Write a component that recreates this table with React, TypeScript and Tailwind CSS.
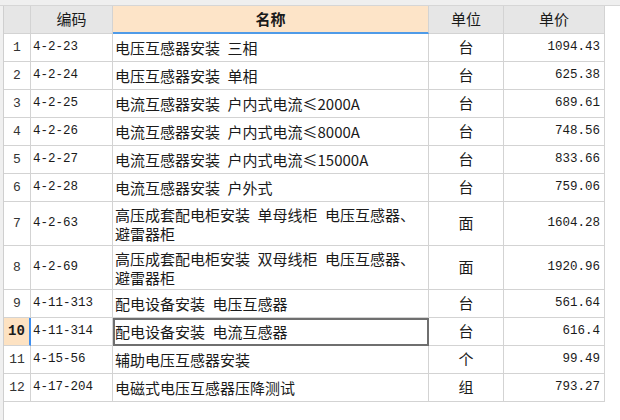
type Row = { no: number; code: string; name: string[]; unit: string; price: string };

const rows: Row[] = [
  { no: 1, code: "4-2-23", name: ["电压互感器安装\u2002三相"], unit: "台", price: "1094.43" },
  { no: 2, code: "4-2-24", name: ["电压互感器安装\u2002单相"], unit: "台", price: "625.38" },
  { no: 3, code: "4-2-25", name: ["电流互感器安装\u2002户内式电流≤2000A"], unit: "台", price: "689.61" },
  { no: 4, code: "4-2-26", name: ["电流互感器安装\u2002户内式电流≤8000A"], unit: "台", price: "748.56" },
  { no: 5, code: "4-2-27", name: ["电流互感器安装\u2002户内式电流≤15000A"], unit: "台", price: "833.66" },
  { no: 6, code: "4-2-28", name: ["电流互感器安装\u2002户外式"], unit: "台", price: "759.06" },
  { no: 7, code: "4-2-63", name: ["高压成套配电柜安装\u2002单母线柜\u2002电压互感器、", "避雷器柜"], unit: "面", price: "1604.28" },
  { no: 8, code: "4-2-69", name: ["高压成套配电柜安装\u2002双母线柜\u2002电压互感器、", "避雷器柜"], unit: "面", price: "1920.96" },
  { no: 9, code: "4-11-313", name: ["配电设备安装\u2002电压互感器"], unit: "台", price: "561.64" },
  { no: 10, code: "4-11-314", name: ["配电设备安装\u2002电流互感器"], unit: "台", price: "616.4" },
  { no: 11, code: "4-15-56", name: ["辅助电压互感器安装"], unit: "个", price: "99.49" },
  { no: 12, code: "4-17-204", name: ["电磁式电压互感器压降测试"], unit: "组", price: "793.27" },
];

const cell = "box-border border-r border-b border-[#d3d3d3] flex items-center";
const cjk = "font-['Noto_Sans_CJK_SC',sans-serif] text-[15px]";
const mono = "font-['Liberation_Mono','Noto_Sans_CJK_SC',monospace] text-[12.5px]";

export default function App() {
  return (
    <div className="flex h-[420px] w-[620px] flex-col overflow-hidden bg-white text-[#1a1a1a]">
      <div className="h-[6px] shrink-0 border-b border-[#d6d6d6] bg-[#efefef]" />
      <div className="flex flex-1">
        <div className="w-[4px] shrink-0 border-r border-[#cfcfcf] bg-[#f0f0f0]" />
        <div className="self-start">
          <div className="grid grid-cols-[27px_82px_316px_75px_101px]">
            {/* header */}
            <div className={`${cell} h-[28px] bg-[#e6e6e6]`} />
            <div className={`${cell} ${cjk} h-[28px] justify-center bg-[#e6e6e6]`}>编码</div>
            <div className={`${cell} ${cjk} h-[28px] justify-center border-b-2 border-b-[#4f9be8] bg-[#fde4c8] font-bold`}>
              名称
            </div>
            <div className={`${cell} ${cjk} h-[28px] justify-center bg-[#e6e6e6]`}>单位</div>
            <div className={`${cell} ${cjk} h-[28px] justify-center bg-[#e6e6e6]`}>单价</div>

            {rows.map((r) => {
              const h = r.name.length > 1 ? "h-[44px]" : "h-[28px]";
              const sel = r.no === 10;
              return (
                <div key={r.no} className="contents">
                  <div
                    className={`${cell} ${mono} ${h} justify-center ${
                      sel ? "bg-[#fde2c2] font-bold text-[14px] border-r-2 border-r-[#3d8ef0]" : "text-[13px] text-[#333]"
                    }`}
                  >
                    {r.no}
                  </div>
                  <div className={`${cell} ${mono} ${h} pl-[2px]`}>{r.code}</div>
                  <div
                    className={`${cell} ${cjk} ${h} whitespace-pre pl-[2px] leading-[19px] ${
                      sel ? "outline-2 -outline-offset-2 outline-[#6f6f6f]" : ""
                    }`}
                  >
                    <div>
                      {r.name.map((l) => (
                        <div key={l}>{l}</div>
                      ))}
                    </div>
                  </div>
                  <div className={`${cell} ${cjk} ${h} justify-center`}>{r.unit}</div>
                  <div className={`${cell} ${mono} ${h} justify-end pr-[4px]`}>{r.price}</div>
                </div>
              );
            })}
          </div>
        </div>
      </div>
    </div>
  );
}
